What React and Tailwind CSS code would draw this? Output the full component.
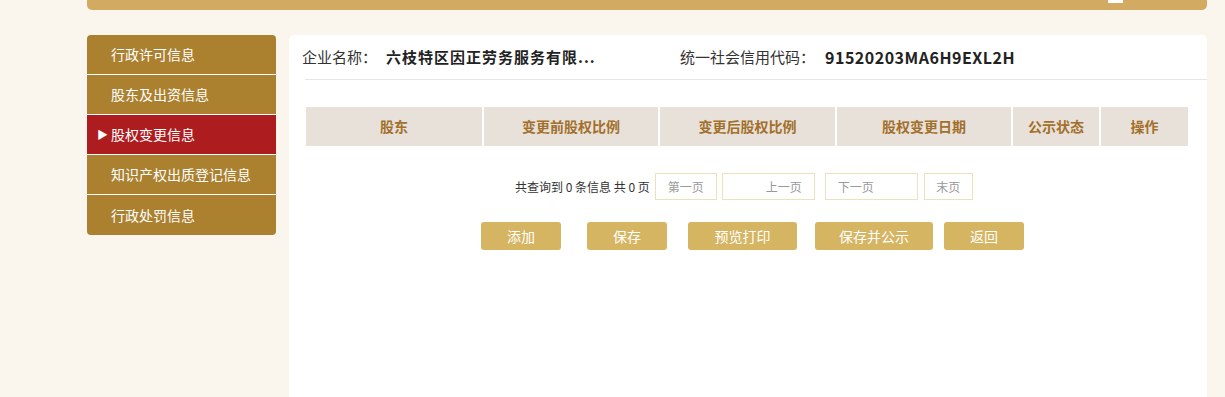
import React from 'react';

const font = { fontFamily: '"Noto Sans CJK SC", "Noto Sans", sans-serif' };

const menu = ['行政许可信息', '股东及出资信息', '股权变更信息', '知识产权出质登记信息', '行政处罚信息'];

// column widths of the table header
const columns = [
  ['股东', 'w-[176px]'],
  ['变更前股权比例', 'w-[174px]'],
  ['变更后股权比例', 'w-[175px]'],
  ['股权变更日期', 'w-[174px]'],
  ['公示状态', 'w-[86px]'],
  ['操作', 'w-[87px]'],
];

function Sidebar() {
  return (
    <div className="w-[189px] shrink-0 flex flex-col">
      {menu.map((item, i) => {
        const active = i === 2;
        return (
          <div
            key={item}
            className={
              'h-[40px] flex items-center text-[14px] text-white border-b border-white ' +
              (active ? 'bg-[#ad1c1f] ' : 'bg-[#ab8130] ') +
              (i === 0 ? 'rounded-t-[4px] ' : '') +
              (i === menu.length - 1 ? 'rounded-b-[4px] border-b-0 h-[39px] ' : '')
            }
          >
            <span className="w-[24px] pl-[10px] text-[11px] leading-none">{active ? '▶' : ''}</span>
            <span>{item}</span>
          </div>
        );
      })}
    </div>
  );
}

function Content() {
  return (
    <div className="w-[918px] h-[362px] bg-white rounded-t-[5px]">
      {/* company header */}
      <div className="h-[44px] flex items-center pl-[13px] text-[15px] text-[#333]">
        <span className="w-[84px]">企业名称：</span>
        <span className="w-[294px] font-bold text-[#222] tracking-[1px]">六枝特区因正劳务服务有限...</span>
        <span>统一社会信用代码：</span>
        <span className="ml-[10px] font-bold text-[16px] tracking-[0.5px] text-[#222]">91520203MA6H9EXL2H</span>
      </div>
      <div className="ml-[16px] border-t border-[#e6e6e6]" />

      {/* table header */}
      <div className="mt-[27px] ml-[17px] flex gap-[2px] w-[882px]">
        {columns.map(([label, w]) => (
          <div
            key={label}
            className={w + ' h-[39px] bg-[#e8e1da] flex items-center justify-center text-[14px] font-bold text-[#a2702b]'}
          >
            {label}
          </div>
        ))}
      </div>

      {/* pagination */}
      <div className="mt-[27px] ml-[226px] flex items-center text-[12px]">
        <span className="text-[#333] mr-[5px]">共查询到 0 条信息 共 0 页</span>
        <div className="w-[62px] h-[27px] border border-[#eedfbd] flex items-center justify-center text-[#999]">第一页</div>
        <div className="ml-[5px] w-[93px] h-[27px] border border-[#eedfbd] flex items-center pl-[43px] text-[#999]">上一页</div>
        <div className="ml-[10px] w-[93px] h-[27px] border border-[#eedfbd] flex items-center pl-[12px] text-[#999]">下一页</div>
        <div className="ml-[6px] w-[49px] h-[27px] border border-[#eedfbd] flex items-center justify-center text-[#999]">末页</div>
      </div>

      {/* action buttons */}
      <div className="mt-[22px] ml-[192px] flex text-[14px] text-white">
        <button className="w-[80px] h-[28px] rounded-[3px] bg-[#d5b562]">添加</button>
        <button className="ml-[26px] w-[80px] h-[28px] rounded-[3px] bg-[#d5b562]">保存</button>
        <button className="ml-[21px] w-[109px] h-[28px] rounded-[3px] bg-[#d5b562]">预览打印</button>
        <button className="ml-[18px] w-[118px] h-[28px] rounded-[3px] bg-[#d5b562]">保存并公示</button>
        <button className="ml-[11px] w-[80px] h-[28px] rounded-[3px] bg-[#d5b562]">返回</button>
      </div>
    </div>
  );
}

export default function App() {
  return (
    <div className="w-[1225px] h-[397px] overflow-hidden bg-[#faf6ee]" style={font}>
      {/* top bar */}
      <div className="ml-[87px] w-[1120px] h-[10px] bg-[#d3aa62] rounded-b-[5px] flex justify-end">
        <div className="mr-[84px] w-[15px] h-[3px] bg-white" />
      </div>

      <div className="mt-[25px] ml-[87px] flex gap-[13px]">
        <Sidebar />
        <Content />
      </div>
    </div>
  );
}
